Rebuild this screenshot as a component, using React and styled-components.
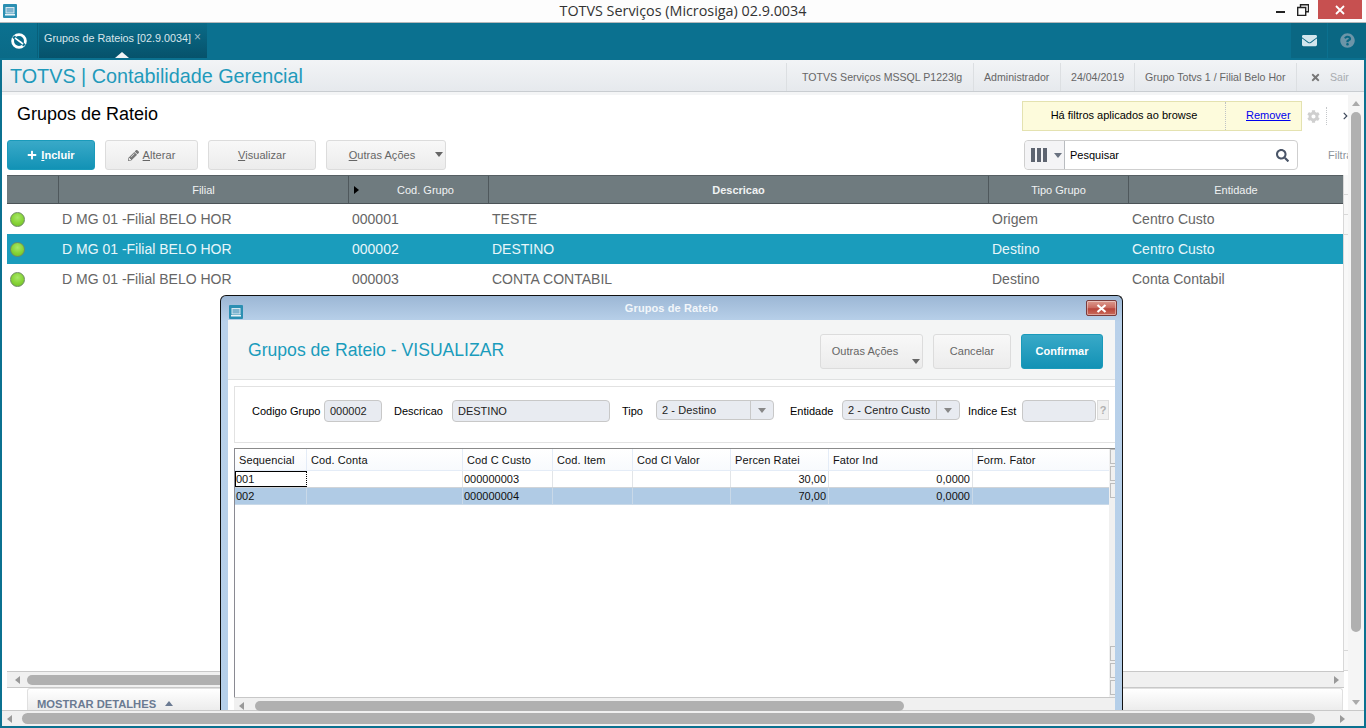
import React from 'react';
import styled, { createGlobalStyle } from 'styled-components';
import { FaCog, FaPencilAlt, FaChevronRight, FaTimes, FaSearch, FaPlus, FaEnvelope, FaQuestionCircle } from 'react-icons/fa';

const Global = createGlobalStyle`
  html, body { margin: 0; padding: 0; overflow: hidden; }
  * { box-sizing: border-box; }
  body { font-family: "Liberation Sans", Arial, sans-serif; font-size: 11px; }
`;

const Desktop = styled.div`
  position: relative;
  width: 1366px;
  height: 728px;
  display: flex;
  flex-direction: column;
  overflow: hidden;
  background: #0b7190;
`;

/* window chrome */
const WindowBar = styled.div`
  position: relative;
  height: 23px;
  flex: none;
  display: flex;
  align-items: center;
  justify-content: center;
  background: #fdfdfd;
  border-bottom: 1px solid #b5b8ba;
`;

const WindowTitle = styled.span`
  font-family: "Open Sans", "Noto Sans", sans-serif;
  font-size: 14.35px;
  color: #333;
  margin-top: -1px;
`;

const IconSlot = styled.span`
  position: absolute;
  left: ${(p) => p.$x}px;
  top: ${(p) => p.$y}px;
  display: flex;
`;

const WinControls = styled.div`
  position: absolute;
  right: 4px;
  top: 0;
  display: flex;
  height: 19px;
`;

const WinBtn = styled.div`
  width: ${(p) => p.$w}px;
  height: 19px;
  display: flex;
  align-items: center;
  justify-content: center;
  background: ${(p) => p.$bg || 'transparent'};
`;

const MinGlyph = styled.span`
  width: 9px;
  height: 2px;
  margin-top: 4px;
  background: #222;
`;

/* tabs */
const TabBar = styled.div`
  height: 37px;
  flex: none;
  display: flex;
  background: #0b7190;
`;

const LogoCell = styled.div`
  width: 38px;
  height: 35px;
  display: flex;
  align-items: center;
  justify-content: center;
  background: linear-gradient(#0b7190, #0a6a87);
  border-right: 1px solid #08607b;
`;

const Tab = styled.div`
  position: relative;
  width: 168px;
  height: 35px;
  margin-left: 1px;
  padding: 0 0 5px 5px;
  display: flex;
  align-items: center;
  gap: 3px;
  color: #d8e6ec;
  font-size: 10.8px;
  white-space: nowrap;
  background: linear-gradient(#0a6b88, #06526b);
`;

const TabClose = styled.span`
  color: #9cc0cd;
  font-size: 12px;
  margin-top: -2px;
`;

const TabCaret = styled.span`
  position: absolute;
  left: 76px;
  bottom: 0;
  width: 0;
  height: 0;
  border-left: 7px solid transparent;
  border-right: 7px solid transparent;
  border-bottom: 6px solid #f2f4f6;
`;

const TabSpacer = styled.div`
  flex: 1;
`;

const TabIconCell = styled.div`
  width: ${(p) => p.$w}px;
  height: 35px;
  margin-left: 1px;
  display: flex;
  align-items: center;
  justify-content: center;
  background: #0a6783;
`;

/* application shell */
const Shell = styled.div`
  flex: 1;
  min-height: 0;
  margin: 0 2px;
  display: flex;
  flex-direction: column;
  background: #fff;
`;

const AppHeader = styled.div`
  height: 35px;
  flex: none;
  display: flex;
  align-items: stretch;
  background: linear-gradient(#f2f4f6 0, #e6e9ed 31px, #c9cdd1 31px, #c9cdd1 32px, #f4f5f6 32px);
  padding: 3px 0 4px 8px;
`;

const AppTitle = styled.div`
  flex: 1;
  font-size: 19.8px;
  line-height: 26px;
  color: #1f9abb;
  white-space: nowrap;
`;

const HeaderItem = styled.div`
  width: ${(p) => p.$w}px;
  padding-left: ${(p) => p.$pl || 10}px;
  border-left: 1px solid #dcdfe2;
  display: flex;
  align-items: center;
  gap: 9px;
  color: #666;
  font-size: 10.6px;
  white-space: nowrap;
`;

const SairLabel = styled.span`
  color: #a8acb0;
`;

const Body = styled.div`
  flex: 1;
  min-height: 0;
  display: flex;
`;

const Main = styled.div`
  width: 1346px;
  flex: none;
  display: flex;
  flex-direction: column;
  overflow: hidden;
`;

const TopRow = styled.div`
  height: 45px;
  flex: none;
  display: flex;
  justify-content: space-between;
  padding: 6px 0 0 15px;
`;

const PageTitle = styled.h1`
  margin: 0;
  font-size: 18px;
  font-weight: normal;
  line-height: 26px;
  color: #000;
`;

const RightCluster = styled.div`
  width: ${(p) => p.$w}px;
  flex: none;
  margin-left: auto;
  display: flex;
  align-items: center;
  overflow: hidden;
  height: 30px;
`;

const FilterBox = styled.div`
  width: 280px;
  height: 30px;
  flex: none;
  display: flex;
  align-items: center;
  background: #fdfbdc;
  border: 1px solid #e4e2b0;
  color: #000;
`;

const FilterText = styled.div`
  width: 203px;
  height: 100%;
  display: flex;
  align-items: center;
  justify-content: center;
  padding-bottom: 2px;
  border-right: 1px dotted #bfc3c6;
`;

const FilterLink = styled.a`
  margin: -2px 0 0 20px;
  color: #0000ee;
  text-decoration: underline;
`;

const GearSlot = styled.span`
  display: flex;
  margin: 0 6px 0 5px;
`;

const DottedSep = styled.span`
  width: 1px;
  height: 18px;
  border-left: 1px dotted #c4c7ca;
  margin-right: 16px;
`;

const ToolRow = styled.div`
  height: 30px;
  flex: none;
  display: flex;
  align-items: center;
  gap: 10px;
  padding-left: 5px;
  margin-bottom: 5px;
`;

const Button = styled.button`
  width: ${(p) => p.$w}px;
  height: ${(p) => p.$h || 30}px;
  flex: none;
  position: relative;
  display: flex;
  align-items: center;
  justify-content: center;
  gap: 4px;
  padding: 0;
  font: ${(p) => (p.$primary ? 'bold' : 'normal')} 11px "Liberation Sans", Arial, sans-serif;
  letter-spacing: 0.05px;
  color: ${(p) => (p.$primary ? '#fff' : '#666')};
  border-radius: 3px;
  border: 1px solid ${(p) => (p.$primary ? '#1a9aba' : '#dcdcdc')};
  background: ${(p) =>
    p.$primary
      ? 'linear-gradient(#39a9c8, #1292b5)'
      : 'linear-gradient(#f8f8f8, #ececec)'};
`;

const ButtonLabel = styled.span`
  margin-right: ${(p) => p.$mr || 0}px;
`;

const Triangle = styled.span`
  display: block;
  flex: none;
  width: 0;
  height: 0;
  margin-left: ${(p) => p.$ml || 0}px;
  border-style: solid;
  border-color: transparent;
  ${(p) => {
    const s = p.$s || 4;
    const c = p.$c || '#999';
    if (p.$dir === 'up') return `border-width: 0 ${s}px ${s + 1}px; border-bottom-color: ${c};`;
    if (p.$dir === 'left') return `border-width: ${s}px ${s + 1}px ${s}px 0; border-right-color: ${c};`;
    if (p.$dir === 'right') return `border-width: ${s}px 0 ${s}px ${s + 1}px; border-left-color: ${c};`;
    return `border-width: ${s + 1}px ${s}px 0; border-top-color: ${c};`;
  }}
`;

const ButtonCaret = styled(Triangle)`
  position: absolute;
  right: ${(p) => p.$r}px;
  top: ${(p) => p.$t}px;
`;

const SearchBox = styled.div`
  width: 274px;
  height: 30px;
  flex: none;
  display: flex;
  align-items: center;
  border: 1px solid #cfcfcf;
  border-radius: 4px;
  background: #fff;
`;

const ColumnsPick = styled.div`
  width: 40px;
  height: 100%;
  flex: none;
  display: flex;
  align-items: center;
  gap: 2px;
  padding-left: 6px;
  background: #f4f4f6;
  border-right: 1px solid #b9bcc0;
  border-radius: 4px 0 0 4px;
`;

const ColumnBar = styled.span`
  width: 4px;
  height: 14px;
  background: #5d6470;
`;

const SearchText = styled.span`
  flex: 1;
  padding-left: 5px;
  color: #000;
`;

const SearchIcon = styled.span`
  display: flex;
  margin-right: 8px;
`;

const FilterHint = styled.span`
  margin-left: 30px;
  color: #8d949c;
  white-space: nowrap;
`;

/* browse */
const BrowseArea = styled.div`
  flex: 1;
  min-height: 0;
  display: flex;
  padding-left: 5px;
`;

const Browse = styled.div`
  width: 1336px;
  flex: none;
`;

const browseColumns = '52px 290px 140px 500px 140px 214px';

const BrowseHead = styled.div`
  display: grid;
  grid-template-columns: ${browseColumns};
  height: 29px;
  background: #6f7b7f;
  border-top: 1px solid #565f63;
  border-bottom: 1px solid #4b5357;
`;

const HeadCell = styled.div`
  position: relative;
  display: flex;
  align-items: center;
  justify-content: center;
  color: #f0f2f3;
  font-weight: ${(p) => (p.$bold ? 'bold' : 'normal')};
  padding-left: ${(p) => p.$pl || 0}px;
  border-right: 1px solid #4f585c;
  &:last-child { border-right: 0; }
`;

const SortMark = styled(Triangle)`
  position: absolute;
  left: 5px;
  top: 10px;
`;

const BrowseRow = styled.div`
  display: grid;
  grid-template-columns: ${browseColumns};
  height: 30px;
  font-size: 14px;
  color: ${(p) => (p.$selected ? '#e8f6fa' : '#666')};
  background: ${(p) => (p.$selected ? '#1a9cbc' : '#fff')};
`;

const RowCell = styled.div`
  display: flex;
  align-items: center;
  padding-left: 3px;
  white-space: nowrap;
`;

const Led = styled.span`
  width: 15px;
  height: 15px;
  border-radius: 50%;
  border: 1px solid #6d8a63;
  background: radial-gradient(circle at 50% 35%, #a8e868 0, #86d335 55%, #6cb82a 100%);
`;

const BrowseTicks = styled.div`
  width: 5px;
  flex: none;
  display: flex;
  flex-direction: column;
  justify-content: space-between;
  background: #f8f8f8;
  border-left: 1px solid #d8d8d8;
`;

const TickGroup = styled.div`
  display: flex;
  flex-direction: column;
`;

const Tick = styled.span`
  height: 20px;
  border-bottom: 1px solid #d8d8d8;
`;

const HScroll = styled.div`
  height: ${(p) => p.$h}px;
  flex: none;
  width: ${(p) => (p.$w ? `${p.$w}px` : 'auto')};
  margin-left: ${(p) => p.$ml || 0}px;
  display: flex;
  align-items: center;
  padding: ${(p) => p.$pt || 0}px ${(p) => p.$pr || 0}px 0 ${(p) => p.$pl || 0}px;
  background: #f0f0f0;
  border-top: 1px solid #c8c8c8;
  border-bottom: ${(p) => (p.$bb ? '1px solid #c8c8c8' : '0')};
`;

const Thumb = styled.span`
  width: ${(p) => p.$w}px;
  height: ${(p) => p.$h}px;
  flex: none;
  margin-left: ${(p) => p.$ml}px;
  margin-right: auto;
  border-radius: 6px;
  background: #b0b0b0;
`;

const DetailsTab = styled.div`
  height: 22px;
  width: 1316px;
  flex: none;
  margin-left: 25px;
  display: flex;
  align-items: center;
  gap: 9px;
  padding: 8px 0 0 9px;
  border: 1px solid #e0e0e0;
  border-bottom: 0;
  border-radius: 3px 3px 0 0;
  background: linear-gradient(#fff, #ececec);
  color: #6a7a92;
  font-size: 11.2px;
  font-weight: bold;
`;

const VScroll = styled.div`
  flex: 1;
  display: flex;
  flex-direction: column;
  align-items: center;
  background: #f5f5f5;
  padding-top: 6px;
`;

const VThumb = styled.span`
  width: 10px;
  height: 520px;
  margin: 6px 0 auto;
  border-radius: 6px;
  background: #b0b0b0;
`;

const VArrowEnd = styled.span`
  display: flex;
  margin-bottom: 5px;
`;

const BottomFrame = styled.div`
  height: 2px;
  flex: none;
`;

/* dialog */
const Dialog = styled.div`
  position: absolute;
  left: 220px;
  top: 295px;
  width: 903px;
  height: 415px;
  display: flex;
  flex-direction: column;
  padding: 0 7px;
  border: 1px solid #111;
  border-bottom: 0;
  border-radius: 6px 6px 0 0;
  background: linear-gradient(#9cb7d5 0, #b9d1ea 26px, #b5cfe9 100%);
`;

const DialogBar = styled.div`
  position: relative;
  height: 24px;
  flex: none;
  display: flex;
  align-items: center;
  justify-content: center;
  color: #f2f6fa;
  font-weight: bold;
  font-size: 11px;
  letter-spacing: 0.1px;
`;

const DialogClose = styled.div`
  position: absolute;
  right: -2px;
  top: 4px;
  width: 31px;
  height: 16px;
  display: flex;
  align-items: center;
  justify-content: center;
  border: 1px solid #7a3b3b;
  border-radius: 2px;
  background: linear-gradient(#dc9a8e 0, #c9695e 50%, #b8443a 55%, #c96b5c 100%);
  box-shadow: inset 0 0 0 1px rgba(255, 255, 255, 0.4);
`;

const DialogClient = styled.div`
  flex: 1;
  min-height: 0;
  display: flex;
  flex-direction: column;
  background: #fff;
`;

const DialogHead = styled.div`
  height: 60px;
  flex: none;
  display: flex;
  align-items: center;
  padding: 3px 12px 0 20px;
  gap: 10px;
  background: #f4f5f5;
  border-bottom: 1px solid #dfe1e1;
`;

const DialogTitle = styled.h2`
  flex: 1;
  margin: 0 0 2px;
  font-size: 17.6px;
  font-weight: normal;
  color: #1a9cbc;
  white-space: nowrap;
`;

const FormPanel = styled.div`
  height: 57px;
  flex: none;
  margin: 6px 0 5px 6px;
  display: flex;
  align-items: flex-start;
  padding: 13px 0 0 17px;
  border: 1px solid #e2e2e2;
  border-right: 0;
  background: #fff;
`;

const FieldLabel = styled.span`
  width: ${(p) => p.$w}px;
  margin-left: ${(p) => p.$ml || 0}px;
  flex: none;
  line-height: 22px;
  color: #000;
  white-space: nowrap;
`;

const TextInput = styled.div`
  width: ${(p) => p.$w}px;
  height: 22px;
  flex: none;
  padding-left: 5px;
  line-height: 20px;
  color: #222;
  background: #e8ebf1;
  border: 1px solid #c8c8c8;
  border-radius: 4px;
`;

const Select = styled.div`
  width: 118px;
  height: 20px;
  flex: none;
  display: flex;
  align-items: center;
  color: #222;
  background: #e8ebf1;
  border: 1px solid #c8c8c8;
  border-radius: 4px;
`;

const SelectValue = styled.span`
  flex: 1;
  padding-left: 5px;
  letter-spacing: 0.1px;
`;

const SelectArrow = styled.span`
  width: 23px;
  height: 100%;
  flex: none;
  display: flex;
  align-items: center;
  justify-content: center;
  border-left: 1px solid #c8c8c8;
`;

const HelpBtn = styled.div`
  width: 12px;
  height: 20px;
  flex: none;
  margin-left: 1px;
  display: flex;
  align-items: center;
  justify-content: center;
  color: #b0b0b0;
  font-weight: bold;
  background: #f0f0f0;
  border: 1px solid #ddd;
`;

const GridArea = styled.div`
  flex: 1;
  min-height: 0;
  margin-left: 6px;
  display: flex;
  border-top: 1px solid #8a8a8a;
  border-left: 1px solid #8a8a92;
`;

const Grid = styled.div`
  width: 874px;
  flex: none;
`;

const gridColumns = '72px 156px 90px 80px 98px 98px 144px 136px';

const GridHead = styled.div`
  display: grid;
  grid-template-columns: ${gridColumns};
  height: 22px;
  background: linear-gradient(#fff, #f8fafd);
  border-bottom: 1px solid #e4ecf7;
`;

const GridHeadCell = styled.div`
  display: flex;
  align-items: center;
  padding-left: 4px;
  color: #111;
  letter-spacing: 0.1px;
  border-right: 1px solid #e4ecf7;
  &:last-child { border-right: 0; }
`;

const GridRow = styled.div`
  display: grid;
  grid-template-columns: ${gridColumns};
  height: 17px;
  background: ${(p) => (p.$selected ? '#b0cbe5' : '#fff')};
  border-bottom: 1px solid ${(p) => (p.$selected ? '#c9d9e8' : '#d0d4d8')};
`;

const GridCell = styled.div`
  display: flex;
  align-items: center;
  justify-content: ${(p) => (p.$right ? 'flex-end' : 'flex-start')};
  padding: 0 2px 0 1px;
  color: #111;
  border-right: 1px solid ${(p) => (p.$selected ? '#c9d9e8' : '#e2e5e8')};
  &:last-child { border-right: 0; }
`;

const FocusCell = styled(GridCell)`
  padding: 0;
  border: 1px solid #000;
  border-right: 1px dotted #000;
`;

const GridSide = styled.div`
  flex: 1;
  display: flex;
  flex-direction: column;
  justify-content: space-between;
  background: #f0f0f0;
  padding: 0 0 2px 1px;
`;

const SideGroup = styled.div`
  display: flex;
  flex-direction: column;
  gap: 2px;
`;

const SideBtn = styled.span`
  height: 15px;
  border: 1px solid #bdbdbd;
  border-right: 0;
  background: #f0f0f0;
`;

const AppIcon = () => (
  <svg width="14" height="14" viewBox="0 0 14 14">
    <rect width="14" height="14" rx="1" fill="#2b8fb2" />
    <rect x="2.5" y="3" width="9" height="6.5" fill="#d8e8f0" />
    <rect x="3.5" y="4" width="7" height="4.5" fill="#7fb4cf" />
    <rect x="2" y="10" width="10" height="1.5" fill="#eaf3f7" />
  </svg>
);

const TotvsLogo = () => (
  <svg width="16" height="16" viewBox="0 0 16 16">
    <circle cx="8" cy="8" r="6.4" fill="none" stroke="#fff" strokeWidth="2.8" />
    <path d="M2.5 3.5 C5 7 11 9 13.5 12.5" fill="none" stroke="#0b7190" strokeWidth="3.2" />
    <path d="M4 4.8 C6 7.4 10 8.6 12 11.2" fill="none" stroke="#fff" strokeWidth="1.5" />
  </svg>
);

const Controls = () => (
  <WinControls>
    <WinBtn $w={25}>
      <MinGlyph />
    </WinBtn>
    <WinBtn $w={19}>
      <svg width="12" height="12" viewBox="0 0 12 12">
        <path d="M3.5 3V.7h8v7H9M.7 3.5h8v8h-8z" fill="none" stroke="#222" strokeWidth="1.4" />
      </svg>
    </WinBtn>
    <WinBtn $w={6} />
    <WinBtn $w={44} $bg="#c75050">
      <svg width="10" height="10" viewBox="0 0 10 10">
        <path d="M1 1l8 8M9 1l-8 8" stroke="#fff" strokeWidth="1.8" />
      </svg>
    </WinBtn>
  </WinControls>
);

const browseRows = [
  { code: '000001', desc: 'TESTE', kind: 'Origem', entity: 'Centro Custo' },
  { code: '000002', desc: 'DESTINO', kind: 'Destino', entity: 'Centro Custo', selected: true },
  { code: '000003', desc: 'CONTA CONTABIL', kind: 'Destino', entity: 'Conta Contabil' },
];

const gridHeads = ['Sequencial', 'Cod. Conta', 'Cod C Custo', 'Cod. Item', 'Cod Cl Valor', 'Percen Ratei', 'Fator Ind', 'Form. Fator'];

const App = () => (
  <Desktop>
    <Global />
    <WindowBar>
      <IconSlot $x={3} $y={4}>
        <AppIcon />
      </IconSlot>
      <WindowTitle>TOTVS Serviços (Microsiga) 02.9.0034</WindowTitle>
      <Controls />
    </WindowBar>

    <TabBar>
      <LogoCell>
        <TotvsLogo />
      </LogoCell>
      <Tab>
        Grupos de Rateios [02.9.0034]
        <TabClose>×</TabClose>
        <TabCaret />
      </Tab>
      <TabSpacer />
      <TabIconCell $w={36}>
        <FaEnvelope size={15} color="#d3e6ed" />
      </TabIconCell>
      <TabIconCell $w={38}>
        <FaQuestionCircle size={15} color="#6c95a8" />
      </TabIconCell>
    </TabBar>

    <Shell>
      <AppHeader>
        <AppTitle>TOTVS | Contabilidade Gerencial</AppTitle>
        <HeaderItem $w={187} $pl={15}>TOTVS Serviços MSSQL P1223lg</HeaderItem>
        <HeaderItem $w={87}>Administrador</HeaderItem>
        <HeaderItem $w={74}>24/04/2019</HeaderItem>
        <HeaderItem $w={162}>Grupo Totvs 1 / Filial Belo Hor</HeaderItem>
        <HeaderItem $w={68} $pl={13}>
          <FaTimes size={11} color="#777" />
          <SairLabel>Sair</SairLabel>
        </HeaderItem>
      </AppHeader>

      <Body>
        <Main>
          <TopRow>
            <PageTitle>Grupos de Rateio</PageTitle>
            <RightCluster $w={326}>
              <FilterBox>
                <FilterText>Há filtros aplicados ao browse</FilterText>
                <FilterLink>Remover</FilterLink>
              </FilterBox>
              <GearSlot>
                <FaCog size={13} color="#cfcfcf" />
              </GearSlot>
              <DottedSep />
              <FaChevronRight size={14} color="#3f4a5c" />
            </RightCluster>
          </TopRow>

          <ToolRow>
            <Button $w={88} $primary>
              <FaPlus size={10} />
              <span><u>I</u>ncluir</span>
            </Button>
            <Button $w={93}>
              <FaPencilAlt size={11} color="#777" />
              <span><u>A</u>lterar</span>
            </Button>
            <Button $w={108}>
              <span><u>V</u>isualizar</span>
            </Button>
            <Button $w={120}>
              <ButtonLabel $mr={8}><u>O</u>utras Ações</ButtonLabel>
              <ButtonCaret $dir="down" $c="#666" $r={2} $t={11} />
            </Button>
            <RightCluster $w={324}>
              <SearchBox>
                <ColumnsPick>
                  <ColumnBar />
                  <ColumnBar />
                  <ColumnBar />
                  <Triangle $dir="down" $c="#6a7280" $ml={5} />
                </ColumnsPick>
                <SearchText>Pesquisar</SearchText>
                <SearchIcon>
                  <FaSearch size={13} color="#4a5568" />
                </SearchIcon>
              </SearchBox>
              <FilterHint>Filtrar</FilterHint>
            </RightCluster>
          </ToolRow>

          <BrowseArea>
            <Browse>
              <BrowseHead>
                <HeadCell />
                <HeadCell>Filial</HeadCell>
                <HeadCell $pl={14}>
                  <SortMark $dir="right" $c="#000" />
                  Cod. Grupo
                </HeadCell>
                <HeadCell $bold>Descricao</HeadCell>
                <HeadCell>Tipo Grupo</HeadCell>
                <HeadCell>Entidade</HeadCell>
              </BrowseHead>
              {browseRows.map((r) => (
                <BrowseRow key={r.code} $selected={r.selected}>
                  <RowCell><Led /></RowCell>
                  <RowCell>D MG 01 -Filial BELO HOR</RowCell>
                  <RowCell>{r.code}</RowCell>
                  <RowCell>{r.desc}</RowCell>
                  <RowCell>{r.kind}</RowCell>
                  <RowCell>{r.entity}</RowCell>
                </BrowseRow>
              ))}
            </Browse>
            <BrowseTicks>
              <TickGroup><Tick /><Tick /><Tick /></TickGroup>
              <TickGroup><Tick /><Tick /></TickGroup>
            </BrowseTicks>
          </BrowseArea>

          <HScroll $h={17} $ml={5} $w={1337} $pl={8} $pr={5} $bb>
            <Triangle $dir="left" $c="#999" />
            <Thumb $w={900} $h={10} $ml={7} />
            <Triangle $dir="right" $c="#999" />
          </HScroll>
          <DetailsTab>
            MOSTRAR DETALHES
            <Triangle $dir="up" $c="#6a7a92" />
          </DetailsTab>
        </Main>
        <VScroll>
          <Triangle $dir="up" $c="#aaa" />
          <VThumb />
          <VArrowEnd><Triangle $dir="down" $c="#aaa" /></VArrowEnd>
        </VScroll>
      </Body>

      <HScroll $h={16} $pl={5} $pr={19}>
        <Triangle $dir="left" $c="#999" />
        <Thumb $w={1293} $h={11} $ml={10} />
        <Triangle $dir="right" $c="#999" />
      </HScroll>
    </Shell>
    <BottomFrame />

    <Dialog>
      <IconSlot $x={8} $y={9}>
        <AppIcon />
      </IconSlot>
      <DialogBar>
        Grupos de Rateio
        <DialogClose>
          <svg width="11" height="9" viewBox="0 0 11 9">
            <path d="M1.5 1l8 7M9.5 1l-8 7" stroke="#fff" strokeWidth="2.2" />
          </svg>
        </DialogClose>
      </DialogBar>
      <DialogClient>
        <DialogHead>
          <DialogTitle>Grupos de Rateio - VISUALIZAR</DialogTitle>
          <Button $w={103} $h={35}>
            <ButtonLabel $mr={13}>Outras Ações</ButtonLabel>
            <ButtonCaret $dir="down" $c="#666" $r={2} $t={24} />
          </Button>
          <Button $w={78} $h={35}>Cancelar</Button>
          <Button $w={82} $h={35} $primary>Confirmar</Button>
        </DialogHead>

        <FormPanel>
          <FieldLabel $w={72}>Codigo Grupo</FieldLabel>
          <TextInput $w={58}>000002</TextInput>
          <FieldLabel $w={58} $ml={12}>Descricao</FieldLabel>
          <TextInput $w={158}>DESTINO</TextInput>
          <FieldLabel $w={34} $ml={12}>Tipo</FieldLabel>
          <Select>
            <SelectValue>2 - Destino</SelectValue>
            <SelectArrow><Triangle $dir="down" $c="#888" /></SelectArrow>
          </Select>
          <FieldLabel $w={52} $ml={16}>Entidade</FieldLabel>
          <Select>
            <SelectValue>2 - Centro Custo</SelectValue>
            <SelectArrow><Triangle $dir="down" $c="#888" /></SelectArrow>
          </Select>
          <FieldLabel $w={54} $ml={8}>Indice Est</FieldLabel>
          <TextInput $w={74} />
          <HelpBtn>?</HelpBtn>
        </FormPanel>

        <GridArea>
          <Grid>
            <GridHead>
              {gridHeads.map((h) => (
                <GridHeadCell key={h}>{h}</GridHeadCell>
              ))}
            </GridHead>
            <GridRow>
              <FocusCell>001</FocusCell>
              <GridCell />
              <GridCell>000000003</GridCell>
              <GridCell />
              <GridCell />
              <GridCell $right>30,00</GridCell>
              <GridCell $right>0,0000</GridCell>
              <GridCell />
            </GridRow>
            <GridRow $selected>
              <GridCell $selected>002</GridCell>
              <GridCell $selected />
              <GridCell $selected>000000004</GridCell>
              <GridCell $selected />
              <GridCell $selected />
              <GridCell $selected $right>70,00</GridCell>
              <GridCell $selected $right>0,0000</GridCell>
              <GridCell $selected />
            </GridRow>
          </Grid>
          <GridSide>
            <SideGroup><SideBtn /><SideBtn /><SideBtn /></SideGroup>
            <SideGroup><SideBtn /><SideBtn /><SideBtn /></SideGroup>
          </GridSide>
        </GridArea>
        <HScroll $h={13} $ml={6} $pl={5} $pt={3}>
          <Triangle $dir="left" $c="#999" />
          <Thumb $w={649} $h={10} $ml={11} />
        </HScroll>
      </DialogClient>
    </Dialog>
  </Desktop>
);

export default App;
